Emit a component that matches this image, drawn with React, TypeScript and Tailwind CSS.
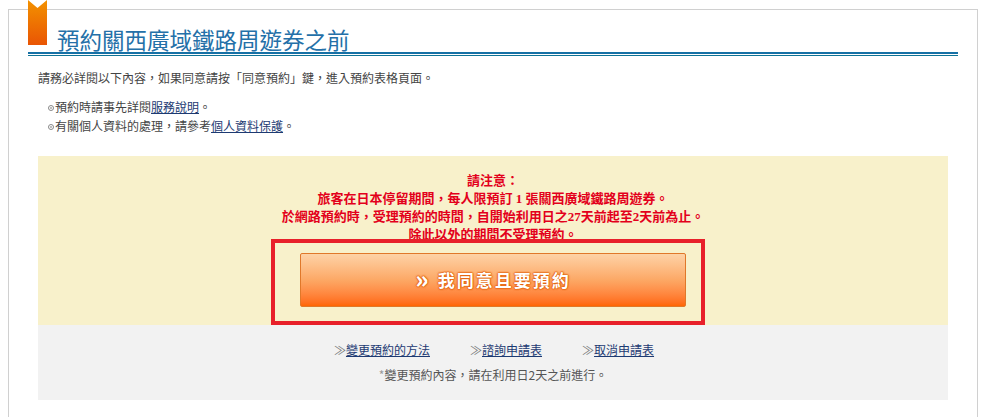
import React from "react";

const cjk = "font-['Noto_Sans_CJK_TC','Noto_Sans_CJK_JP',sans-serif]";

const Bookmark = () => (
  <svg width="19" height="45" viewBox="0 0 19 45" className="absolute left-[28px] top-0">
    <defs>
      <linearGradient id="bm" x1="0" y1="0" x2="0" y2="1">
        <stop offset="0" stopColor="#f39200" />
        <stop offset="1" stopColor="#e95504" />
      </linearGradient>
    </defs>
    <rect x="0" y="0" width="19" height="45" fill="url(#bm)" />
    <polygon points="0,0 19,0 9.5,8" fill="#ffffff" />
  </svg>
);

const Bullet = () => (
  <span className="inline-block align-middle mr-[1px] w-[6px] h-[6px] rounded-full border border-[#888] relative -top-[1px]">
    <span className="absolute inset-[1px] rounded-full bg-[#aaa]" />
  </span>
);

export default function App() {
  return (
    <div className={`relative w-[991px] h-[417px] overflow-hidden bg-white ${cjk}`}>
      <Bookmark />
      <div className="ml-[8px] mt-[9px] w-[970px] h-[420px] border border-b-0 border-[#d0d0d0]">
        {/* heading */}
        <div className="mx-[19px]">
          <div className="h-[44px] flex items-end pl-[29px] pb-[2px] border-b-2 border-[#1670a5]">
            <h1 className="text-[22.5px] leading-none text-[#2470a8]">預約關西廣域鐵路周遊券之前</h1>
          </div>
          <div className="mt-[1px] h-[1px] bg-[#0f7395]" />
        </div>

        {/* intro */}
        <p className="mt-[13px] ml-[29px] text-[12px] leading-[18px] text-[#444]">
          請務必詳閱以下內容，如果同意請按「同意預約」鍵，進入預約表格頁面。
        </p>
        <ul className="mt-[10px] ml-[39px] text-[12px] leading-[19px] text-[#444]">
          <li>
            <Bullet />預約時請事先詳閱<a className="underline text-[#1d3a72]">服務說明</a>。
          </li>
          <li>
            <Bullet />有關個人資料的處理，請參考<a className="underline text-[#1d3a72]">個人資料保護</a>。
          </li>
        </ul>

        {/* notice panel */}
        <div className="mt-[21px] mx-[29px] relative">
          <div className="bg-[#f8f1cb] pt-[16px] pb-[18px] flex flex-col items-center">
            <div className="text-center text-[13px] leading-[18px] font-bold text-[#e3001b] font-['Liberation_Serif','Noto_Sans_CJK_TC',serif]">
              <p>請注意：</p>
              <p>旅客在日本停留期間，每人限預訂 1 張關西廣域鐵路周遊券。</p>
              <p>於網路預約時，受理預約的時間，自開始利用日之27天前起至2天前為止。</p>
              <p>除此以外的期間不受理預約。</p>
            </div>
            <button className="mt-[9px] w-[386px] h-[54px] rounded-[2px] border border-[#e0782a] bg-gradient-to-b from-[#fdd2a6] via-[#fca865] to-[#ff6600] flex items-center justify-center gap-[9px] text-white font-bold text-[17px] [text-shadow:0_0_2px_#e3600a,0_0_2px_#e3600a,0_0_2px_#e3600a,0_0_1px_#c84c00]">
              <span className="text-[24px] leading-none -mt-[4px] font-black">»</span>
              <span className="tracking-[2px]">我同意且要預約</span>
            </button>
          </div>
          <div className="absolute left-[233px] top-[83px] w-[434px] h-[86px] border-4 border-[#e8202a]" />

          {/* links */}
          <div className="bg-[#f2f2f2] pt-[16px] pb-[16px] text-[12px] leading-[18px]">
            <div className="flex justify-center gap-[40px] pl-[2px]">
              <span className="text-[#777]">≫<a className="underline text-[#1d3a72]">變更預約的方法</a></span>
              <span className="text-[#777]">≫<a className="underline text-[#1d3a72]">諮詢申請表</a></span>
              <span className="text-[#777]">≫<a className="underline text-[#1d3a72]">取消申請表</a></span>
            </div>
            <p className="mt-[7px] text-center text-[#555]">
              <span className="text-[#999]">*</span>變更預約內容，請在利用日2天之前進行。
            </p>
          </div>
        </div>
      </div>
    </div>
  );
}
